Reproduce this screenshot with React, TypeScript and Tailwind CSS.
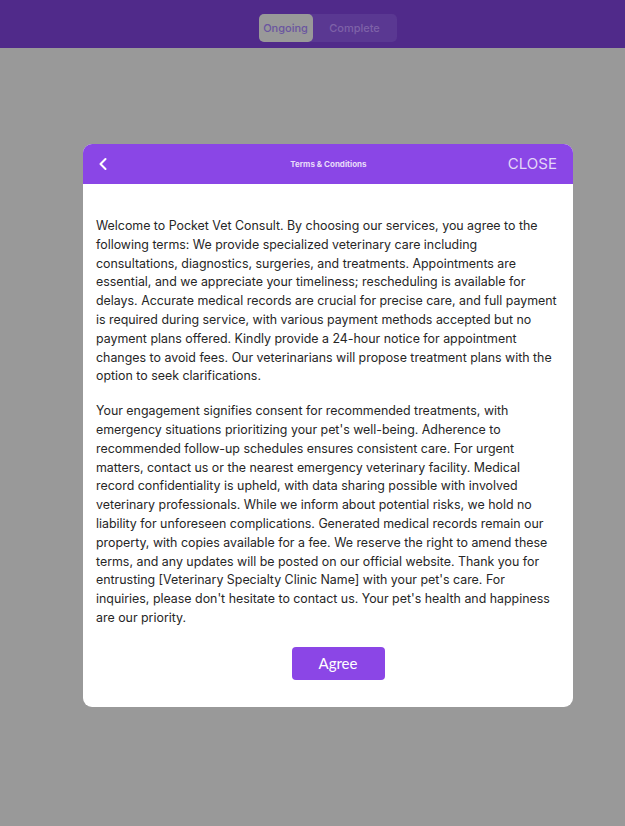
import React from 'react';
import { ChevronLeft } from 'lucide-react';

const paragraphs = [
  "Welcome to Pocket Vet Consult. By choosing our services, you agree to the following terms: We provide specialized veterinary care including consultations, diagnostics, surgeries, and treatments. Appointments are essential, and we appreciate your timeliness; rescheduling is available for delays. Accurate medical records are crucial for precise care, and full payment is required during service, with various payment methods accepted but no payment plans offered. Kindly provide a 24-hour notice for appointment changes to avoid fees. Our veterinarians will propose treatment plans with the option to seek clarifications.",
  "Your engagement signifies consent for recommended treatments, with emergency situations prioritizing your pet's well-being. Adherence to recommended follow-up schedules ensures consistent care. For urgent matters, contact us or the nearest emergency veterinary facility. Medical record confidentiality is upheld, with data sharing possible with involved veterinary professionals. While we inform about potential risks, we hold no liability for unforeseen complications. Generated medical records remain our property, with copies available for a fee. We reserve the right to amend these terms, and any updates will be posted on our official website. Thank you for entrusting [Veterinary Specialty Clinic Name] with your pet's care. For inquiries, please don't hesitate to contact us. Your pet's health and happiness are our priority.",
];

export default function App() {
  return (
    <div className="min-h-[826px] w-full bg-[#999999] font-['Inter',sans-serif]">
      <div className="h-[48px] bg-[#502a8a] flex items-start justify-center pt-[14px] pl-[30px]">
        <div className="flex rounded-[5px] bg-[#5a3892]">
          <div className="h-[28px] w-[54px] rounded-[5px] bg-[#999999] flex items-center justify-center text-[11px] text-[#6a55a0] font-medium">
            Ongoing
          </div>
          <div className="h-[28px] w-[84px] flex items-center justify-center text-[11px] text-[#7e62a8] font-medium">
            Complete
          </div>
        </div>
      </div>

      <div className="flex pt-[96px] pl-[83px]">
        <div className="w-[490px] rounded-[9px] bg-white overflow-hidden">
          <div className="h-[40px] bg-[#8a46e6] flex items-center justify-between pl-[10px] pr-[16px]">
            <ChevronLeft className="w-[20px] h-[20px] text-white" strokeWidth={2.5} />
            <span className="text-[8px] font-bold text-[#e8dcfa] ml-[36px]">Terms &amp; Conditions</span>
            <span className="text-[15px] text-[#e2d6f8]">CLOSE</span>
          </div>
          <div className="px-[13px] pt-[33px] pb-[27px]">
            <div className="space-y-[16px]">
              {paragraphs.map((p, i) => (
                <p key={i} className="text-[12.4px] leading-[18.8px] text-[#262626]">
                  {p}
                </p>
              ))}
            </div>
            <div className="flex justify-center mt-[19px] pl-[20px]">
              <button className="h-[33px] w-[93px] rounded-[4px] bg-[#8b46e6] text-white text-[15px] font-['Lato',sans-serif]">
                Agree
              </button>
            </div>
          </div>
        </div>
      </div>
    </div>
  );
}
